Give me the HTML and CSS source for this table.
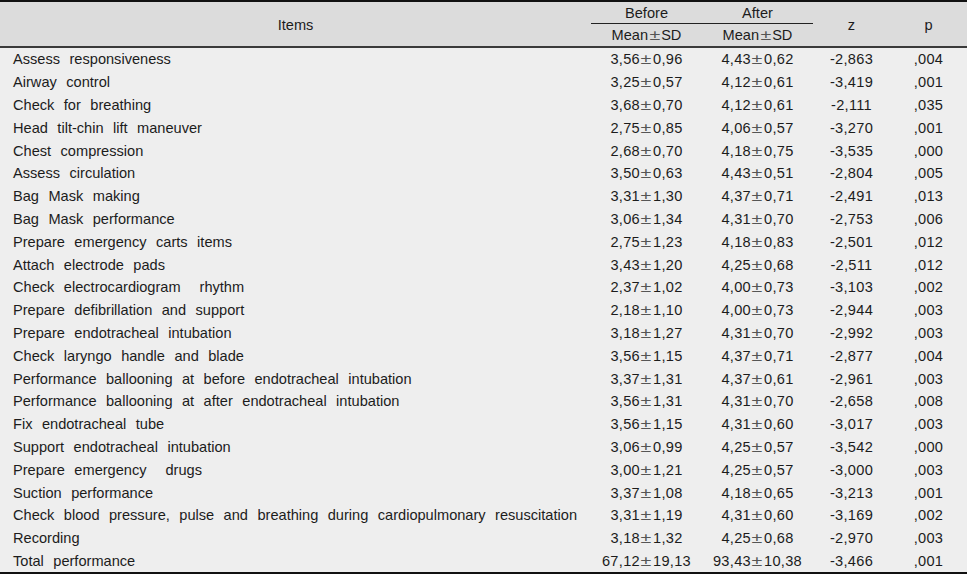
FILE: index.html
```html
<!DOCTYPE html>
<html>
<head>
<meta charset="utf-8">
<link rel="stylesheet" href="styles.css">
</head>
<body>
<table class="tbl">
  <colgroup>
    <col class="c-item"><col class="c-num"><col class="c-num"><col class="c-z"><col class="c-p">
  </colgroup>
  <thead>
    <tr class="h1">
      <th rowspan="2" class="hitem">Items</th>
      <th class="grp">Before</th>
      <th class="grp">After</th>
      <th rowspan="2" class="hz">z</th>
      <th rowspan="2" class="hz">p</th>
    </tr>
    <tr class="h2">
      <th>Mean<span class="pm">±</span>SD</th>
      <th>Mean<span class="pm">±</span>SD</th>
    </tr>
  </thead>
  <tbody>
    <tr><td class="it">Assess responsiveness</td><td>3,56<span class="pm">±</span>0,96</td><td>4,43<span class="pm">±</span>0,62</td><td>-2,863</td><td>,004</td></tr>
    <tr><td class="it">Airway control</td><td>3,25<span class="pm">±</span>0,57</td><td>4,12<span class="pm">±</span>0,61</td><td>-3,419</td><td>,001</td></tr>
    <tr><td class="it">Check for breathing</td><td>3,68<span class="pm">±</span>0,70</td><td>4,12<span class="pm">±</span>0,61</td><td>-2,111</td><td>,035</td></tr>
    <tr><td class="it">Head tilt-chin lift maneuver</td><td>2,75<span class="pm">±</span>0,85</td><td>4,06<span class="pm">±</span>0,57</td><td>-3,270</td><td>,001</td></tr>
    <tr><td class="it">Chest compression</td><td>2,68<span class="pm">±</span>0,70</td><td>4,18<span class="pm">±</span>0,75</td><td>-3,535</td><td>,000</td></tr>
    <tr><td class="it">Assess circulation</td><td>3,50<span class="pm">±</span>0,63</td><td>4,43<span class="pm">±</span>0,51</td><td>-2,804</td><td>,005</td></tr>
    <tr><td class="it">Bag Mask making</td><td>3,31<span class="pm">±</span>1,30</td><td>4,37<span class="pm">±</span>0,71</td><td>-2,491</td><td>,013</td></tr>
    <tr><td class="it">Bag Mask performance</td><td>3,06<span class="pm">±</span>1,34</td><td>4,31<span class="pm">±</span>0,70</td><td>-2,753</td><td>,006</td></tr>
    <tr><td class="it">Prepare emergency carts items</td><td>2,75<span class="pm">±</span>1,23</td><td>4,18<span class="pm">±</span>0,83</td><td>-2,501</td><td>,012</td></tr>
    <tr><td class="it">Attach electrode pads</td><td>3,43<span class="pm">±</span>1,20</td><td>4,25<span class="pm">±</span>0,68</td><td>-2,511</td><td>,012</td></tr>
    <tr><td class="it">Check electrocardiogram &nbsp;rhythm</td><td>2,37<span class="pm">±</span>1,02</td><td>4,00<span class="pm">±</span>0,73</td><td>-3,103</td><td>,002</td></tr>
    <tr><td class="it">Prepare defibrillation and support</td><td>2,18<span class="pm">±</span>1,10</td><td>4,00<span class="pm">±</span>0,73</td><td>-2,944</td><td>,003</td></tr>
    <tr><td class="it">Prepare endotracheal intubation</td><td>3,18<span class="pm">±</span>1,27</td><td>4,31<span class="pm">±</span>0,70</td><td>-2,992</td><td>,003</td></tr>
    <tr><td class="it">Check laryngo handle and blade</td><td>3,56<span class="pm">±</span>1,15</td><td>4,37<span class="pm">±</span>0,71</td><td>-2,877</td><td>,004</td></tr>
    <tr><td class="it">Performance ballooning at before endotracheal intubation</td><td>3,37<span class="pm">±</span>1,31</td><td>4,37<span class="pm">±</span>0,61</td><td>-2,961</td><td>,003</td></tr>
    <tr><td class="it">Performance ballooning at after endotracheal intubation</td><td>3,56<span class="pm">±</span>1,31</td><td>4,31<span class="pm">±</span>0,70</td><td>-2,658</td><td>,008</td></tr>
    <tr><td class="it">Fix endotracheal tube</td><td>3,56<span class="pm">±</span>1,15</td><td>4,31<span class="pm">±</span>0,60</td><td>-3,017</td><td>,003</td></tr>
    <tr><td class="it">Support endotracheal intubation</td><td>3,06<span class="pm">±</span>0,99</td><td>4,25<span class="pm">±</span>0,57</td><td>-3,542</td><td>,000</td></tr>
    <tr><td class="it">Prepare emergency &nbsp;drugs</td><td>3,00<span class="pm">±</span>1,21</td><td>4,25<span class="pm">±</span>0,57</td><td>-3,000</td><td>,003</td></tr>
    <tr><td class="it">Suction performance</td><td>3,37<span class="pm">±</span>1,08</td><td>4,18<span class="pm">±</span>0,65</td><td>-3,213</td><td>,001</td></tr>
    <tr><td class="it">Check blood pressure, pulse and breathing during cardiopulmonary resuscitation</td><td>3,31<span class="pm">±</span>1,19</td><td>4,31<span class="pm">±</span>0,60</td><td>-3,169</td><td>,002</td></tr>
    <tr><td class="it">Recording</td><td>3,18<span class="pm">±</span>1,32</td><td>4,25<span class="pm">±</span>0,68</td><td>-2,970</td><td>,003</td></tr>
    <tr class="last"><td class="it">Total performance</td><td>67,12<span class="pm">±</span>19,13</td><td>93,43<span class="pm">±</span>10,38</td><td>-3,466</td><td>,001</td></tr>
  </tbody>
</table>
</body>
</html>
```

FILE: styles.css
```css
html, body {
  margin: 0;
  padding: 0;
  background: #eeeeee;
}
.tbl {
  width: 967px;
  table-layout: fixed;
  border-collapse: separate;
  border-spacing: 0;
  font-family: "Liberation Sans", Arial, sans-serif;
  font-size: 14.6px;
  color: #1c1c1c;
  border-top: 2px solid #111;
  border-bottom: 3px solid #111;
}
.c-item { width: 591px; }
.c-num { width: 111px; }
.c-z { width: 77px; }
.c-p { width: 77px; }

thead th {
  background: #dcdcdc;
  font-weight: normal;
  padding: 0;
  text-align: center;
  line-height: 16px;
}
.h1 th { height: 21px; }
.h1 th.grp {
  border-bottom: 1px solid #222;
}
.h2 th { height: 22px; }
.hitem, .hz, .h2 th {
  border-bottom: 2px solid #3a3a3a;
}
.hitem, .hz { padding-top: 2px; }

tbody td {
  height: 22.8px;
  padding: 0;
  text-align: center;
  letter-spacing: 0.3px;
  line-height: 16px;
  white-space: nowrap;
}
tbody td.it {
  text-align: left;
  padding-left: 13px;
  letter-spacing: 0;
  word-spacing: 5.4px;
}
.pm {
  display: inline-block;
  margin: 0 2.5px;
  letter-spacing: 0;
  color: #555;
  transform: scaleX(1.35);
}
```
